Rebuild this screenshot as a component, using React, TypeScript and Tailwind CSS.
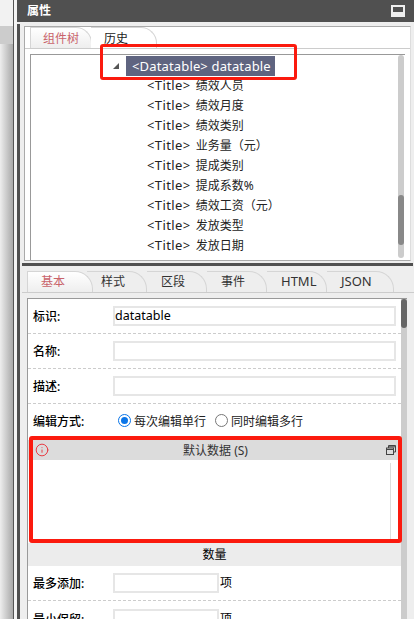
import { Info } from "lucide-react";

const titles = ["绩效人员", "绩效月度", "绩效类别", "业务量（元）", "提成类别", "提成系数%", "绩效工资（元）", "发放类型", "发放日期"];
const formTabs = [
  { name: "样式", cls: "w-[60px] text-[12px]" },
  { name: "区段", cls: "w-[60px] text-[12px]" },
  { name: "事件", cls: "w-[60px] text-[12px]" },
  { name: "HTML", cls: "w-[60px] text-[13px]" },
  { name: "JSON", cls: "w-[67px] text-[13px]" },
];

function Field({ label }: { label: string }) {
  return (
    <div className="flex h-[35px] shrink-0 items-center border-b border-dashed border-[#ccc] pl-[5px]">
      <span className="mt-[2px] w-[80px] shrink-0 text-[12px] font-medium text-black">{label}</span>
      <div className="h-[20px] w-[283px] border-2 border-[#e6e6e6] bg-white" />
    </div>
  );
}

export default function App() {
  return (
    <div className="relative flex h-[619px] w-[414px] overflow-hidden bg-[#eeeeee] font-['Noto_Sans','Noto_Sans_CJK_SC',sans-serif] text-[12px] text-[#222]">
      {/* left edge of the page behind the panel */}
      <div className="flex w-[13px] shrink-0 flex-col">
        <div className="h-[26px] bg-[#f2f2f2]" />
        <div className="h-[18px] bg-[#cccccc]" />
        <div className="flex-1 bg-gradient-to-r from-[#eeeeee] to-[#a9a9a9]" />
      </div>
      <div className="w-px shrink-0 bg-[#555]" />
      <div className="w-[3px] shrink-0 bg-[#f4f4f4]" />

      <div className="flex min-w-0 flex-1 flex-col">
        <div className="flex h-[22px] shrink-0 items-center justify-between bg-[#505050] pr-[9px] pl-[10px]">
          <span className="text-[12px] font-bold text-white">属性</span>
          <div className="h-[12px] w-[14px] bg-[#eeeeee] px-[2px] pt-[2px]">
            <div className="h-[5px] bg-[#505050]" />
          </div>
        </div>

        <div className="flex min-h-0 flex-1">
          <div className="mt-[2px] w-[3px] shrink-0 bg-[#505050]" />
          <div className="flex min-w-0 flex-1 flex-col">
            {/* component tree */}
            <div className="mt-[4px] mr-[3px] ml-[4px] flex h-[235px] shrink-0 flex-col border border-[#aaa] border-r-[#ddd] bg-white">
              <div className="flex h-[22px] shrink-0 border-b border-[#ccc] pl-[5px]">
                <div className="flex h-[21px] w-[62px] items-center justify-center rounded-tr-[16px] border-t border-r border-l border-[#d5d5d5] bg-gradient-to-b from-white to-[#eeeeee] pt-[2px] text-[12px] text-[#c9636b]">
                  组件树
                </div>
                <div className="-ml-px flex h-[21px] w-[66px] items-center rounded-tr-[16px] border-t border-r border-[#d5d5d5] bg-white pt-[2px] pl-[13px] text-[12px]">
                  历史
                </div>
              </div>
              <div className="mx-[5px] mt-[5px] flex min-h-0 flex-1 border-t border-l border-[#999]">
                <div className="min-w-0 flex-1 pt-[1px]">
                  <div className="flex h-[20px] items-center">
                    <svg className="ml-[82px] shrink-0" width="6" height="6" viewBox="0 0 6 6">
                      <path d="M6 0V6H0Z" fill="#555" />
                    </svg>
                    <div className="ml-[7px] flex h-[20px] w-[149px] items-center bg-[#5f6480] pt-[1px] pl-[6px] text-[13px] tracking-[0.15px] text-white">
                      &lt;Datatable&gt; datatable
                    </div>
                  </div>
                  {titles.map((title) => (
                    <div key={title} className="flex h-[20px] items-center pl-[116px] text-[#222]">
                      <span className="text-[13px] tracking-[0.4px]">&lt;Title&gt;</span>
                      <span className="ml-[5px] text-[12px]">{title}</span>
                    </div>
                  ))}
                </div>
                <div className="mr-[1px] mb-[2px] w-[6px] shrink-0 rounded-[3px] bg-[#cccccc] pt-[140px]">
                  <div className="h-[50px] rounded-[3px] bg-[#888888]" />
                </div>
              </div>
            </div>

            <div className="mt-[2px] mr-px ml-[2px] h-[3px] shrink-0 bg-[#505050]" />

            {/* property form */}
            <div className="ml-[2px] flex h-[27px] shrink-0 border-b border-[#ccc] pt-[5px] pl-[5px]">
              <div className="relative z-10 flex h-[21px] w-[66px] items-center rounded-tr-[18px] border-t border-r border-l border-[#d5d5d5] bg-gradient-to-b from-white to-[#eeeeee] pl-[13px] text-[12px] text-[#c9636b]">
                基本
              </div>
              <div className="-ml-[6px] flex">
                {formTabs.map((tab) => (
                  <div key={tab.name} className={`flex h-[21px] items-center rounded-tr-[18px] border-t border-r border-[#d5d5d5] pl-[14px] text-[#333] ${tab.cls}`}>
                    {tab.name}
                  </div>
                ))}
              </div>
            </div>

            <div className="mt-[5px] mr-[7px] ml-[7px] flex min-h-0 flex-1 border-t border-l border-[#999]">
              <div className="flex min-w-0 flex-1 flex-col bg-white">
                <div className="flex h-[35px] shrink-0 items-center border-b border-dashed border-[#ccc] pl-[5px]">
                  <span className="mt-[2px] w-[80px] shrink-0 text-[12px] font-medium text-black">标识:</span>
                  <div className="flex h-[20px] w-[283px] items-center border-2 border-[#e6e6e6] pt-[1px] text-[12.5px] text-black">datatable</div>
                </div>
                <Field label="名称:" />
                <Field label="描述:" />
                <div className="flex h-[33px] shrink-0 items-center pl-[5px]">
                  <span className="mt-[2px] w-[80px] shrink-0 text-[12px] font-medium text-black">编辑方式:</span>
                  <span className="ml-[5px] flex h-[13px] w-[13px] items-center justify-center rounded-full border-[1.5px] border-[#0a75e8] bg-white">
                    <span className="h-[7px] w-[7px] rounded-full bg-[#0a75e8]" />
                  </span>
                  <span className="mt-[2px] ml-[3px] text-[12px] text-[#222]">每次编辑单行</span>
                  <span className="ml-[9px] h-[13px] w-[13px] rounded-full border border-[#777] bg-white" />
                  <span className="mt-[2px] ml-[3px] text-[12px] text-[#222]">同时编辑多行</span>
                </div>
                <div className="mt-[3px] flex h-[20px] shrink-0 items-center justify-between bg-[#dcdcdc] pr-[5px] pl-[7px]">
                  <div className="w-[16px]">
                    <Info size={14} strokeWidth={1.6} className="text-[#e8323a]" />
                  </div>
                  <span className="mt-[2px] text-[12px] text-[#333]">默认数据 (S)</span>
                  <div className="flex w-[16px] justify-end">
                    <svg width="10" height="10" viewBox="0 0 10 10" fill="none" stroke="#444" strokeWidth="1">
                      <rect x="0.5" y="3" width="7" height="6.5" />
                      <path d="M2.5 3V0.5H9.5V7H7.5" />
                      <path d="M0.5 4.5H7.5M2.5 1.8H9.5" />
                    </svg>
                  </div>
                </div>
                <div className="flex h-[83px] shrink-0 justify-end">
                  <div className="mt-[3px] mr-[10px] w-px bg-[#dddddd]" />
                </div>
                <div className="flex h-[23px] shrink-0 items-center justify-center bg-[#ececec] text-[12px] text-black">数量</div>
                <div className="flex h-[35px] shrink-0 items-center border-b border-dashed border-[#ccc] pl-[5px]">
                  <span className="mt-[2px] w-[80px] shrink-0 text-[12px] font-medium text-black">最多添加:</span>
                  <div className="h-[20px] w-[106px] border-2 border-[#e6e6e6]" />
                  <span className="ml-px text-[12px] text-black">项</span>
                </div>
                <div className="flex h-[35px] shrink-0 items-center pl-[5px]">
                  <span className="mt-[2px] w-[80px] shrink-0 text-[12px] font-medium text-black">最小保留:</span>
                  <div className="h-[20px] w-[106px] border-2 border-[#e6e6e6]" />
                  <span className="ml-px text-[12px] text-black">项</span>
                </div>
              </div>
              <div className="w-[6px] shrink-0 bg-[#cccccc]">
                <div className="h-[29px] rounded-[3px] bg-[#666666]" />
              </div>
            </div>
          </div>
        </div>
      </div>

      {/* red annotation boxes drawn over the screenshot */}
      <div className="absolute top-[44px] left-[100px] h-[36px] w-[197px] rounded-[3px] border-[3px] border-[#fb1a0e]" />
      <div className="absolute top-[436px] left-[29px] h-[107px] w-[373px] rounded-[3px] border-[4px] border-[#fb1a0e]" />
    </div>
  );
}
